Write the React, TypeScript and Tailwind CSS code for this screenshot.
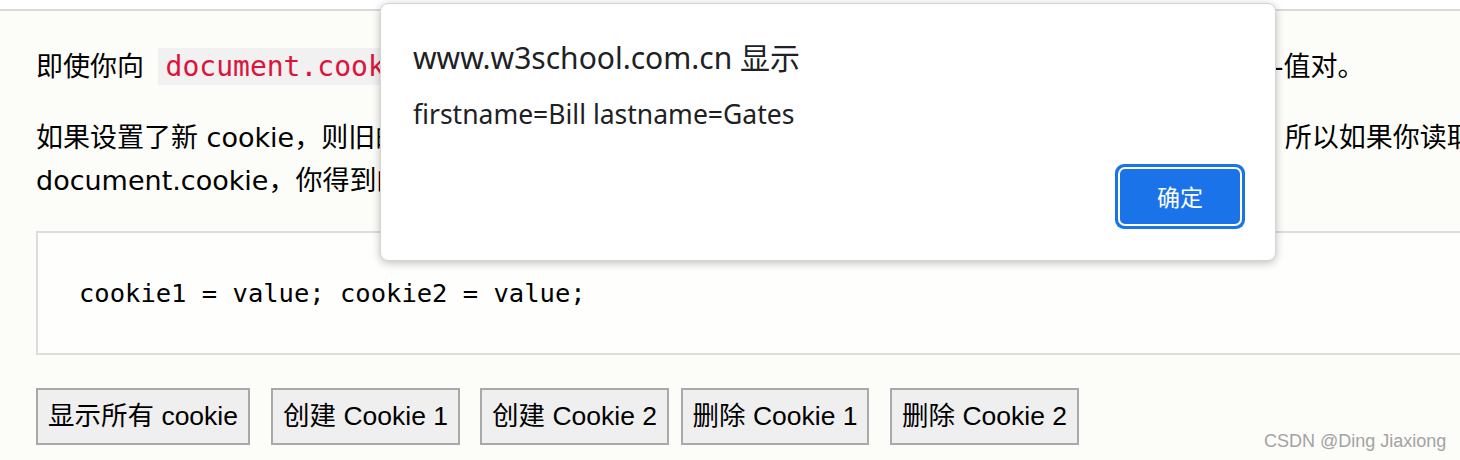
import React from "react";

const textFont = "font-['DejaVu_Sans','Noto_Sans_CJK_SC',sans-serif]";
const btnFont = "font-['Liberation_Sans','Noto_Sans_CJK_SC',sans-serif]";

type DemoButton = { label: string; className: string };

const buttons: DemoButton[] = [
  { label: "显示所有 cookie", className: "w-[214px] mr-[21px]" },
  { label: "创建 Cookie 1", className: "w-[189px] mr-[20px]" },
  { label: "创建 Cookie 2", className: "w-[189px] mr-[12px]" },
  { label: "删除 Cookie 1", className: "w-[188px] mr-[21px]" },
  { label: "删除 Cookie 2", className: "w-[189px]" },
];

function AlertDialog() {
  return (
    <div className="absolute left-[380px] top-[3px] w-[896px] h-[258px] bg-white rounded-[8px] border border-[#d4d4d4] shadow-[0_2px_8px_rgba(0,0,0,0.25)] font-['Noto_Sans','Noto_Sans_CJK_SC',sans-serif] text-[#202124]">
      <div className="pl-[32px] pt-[34px]">
        <h2 className="text-[30px] leading-[40px]">www.w3school.com.cn 显示</h2>
        <p className="mt-[18px] text-[26.5px] leading-[36px]">firstname=Bill lastname=Gates</p>
      </div>
      <div className="absolute right-[30px] bottom-[31px] rounded-[9px] bg-[#1a73e8] p-[3px]">
        <div className="rounded-[7px] bg-white p-[2px]">
          <button className="flex h-[55px] w-[120px] items-center justify-center rounded-[5px] bg-[#1a73e8] text-[23px] text-white font-['Noto_Sans_CJK_SC',sans-serif]">
            确定
          </button>
        </div>
      </div>
    </div>
  );
}

export default function App() {
  return (
    <div className="relative w-[1460px] h-[460px] overflow-hidden bg-[#fcfcf8]">
      <div className="h-[11px] bg-white border-b-2 border-[#d9d9d9]" />

      <div className={`w-[1464px] ml-[36px] pt-[34px] text-[27px] leading-[43px] text-black ${textFont}`}>
        <p>
          即使你向{" "}
          <code className="mx-[5px] bg-[#f1f1f1] px-[8px] py-[2px] text-[#dc143c] text-[28px] font-['DejaVu_Sans_Mono',monospace]">
            document.cookie
          </code>{" "}
          写入一个完整的 cookie 字符串，当你读取它时，你只能看到它的名称-值对。
        </p>
        <p className="mt-[28px]">
          如果设置了新 cookie，则旧的 cookie 并不会被覆盖。新的 cookie 都会被添加到 document.cookie，所以如果你读取 document.cookie，你得到的东西会像这样：
        </p>

        <div className="mt-[29px] h-[124px] flex items-center border-2 border-[#dddddd] bg-[#fefefc] pl-[41px]">
          <pre className="text-[25.5px] leading-[36px] font-['DejaVu_Sans_Mono',monospace]">
            cookie1 = value; cookie2 = value;
          </pre>
        </div>

        <div className="mt-[33px] flex">
          {buttons.map((b) => (
            <button
              key={b.label}
              className={`h-[57px] flex items-center justify-center border-2 border-[#a9a9a9] bg-[#efefef] text-[26.5px] text-black whitespace-nowrap ${btnFont} ${b.className}`}
            >
              {b.label}
            </button>
          ))}
        </div>
      </div>

      <AlertDialog />

      <div className="absolute left-[1264px] top-[428px] text-[18px] text-[#a3a3a3] font-['Liberation_Sans',sans-serif]">
        CSDN @Ding Jiaxiong
      </div>
    </div>
  );
}
